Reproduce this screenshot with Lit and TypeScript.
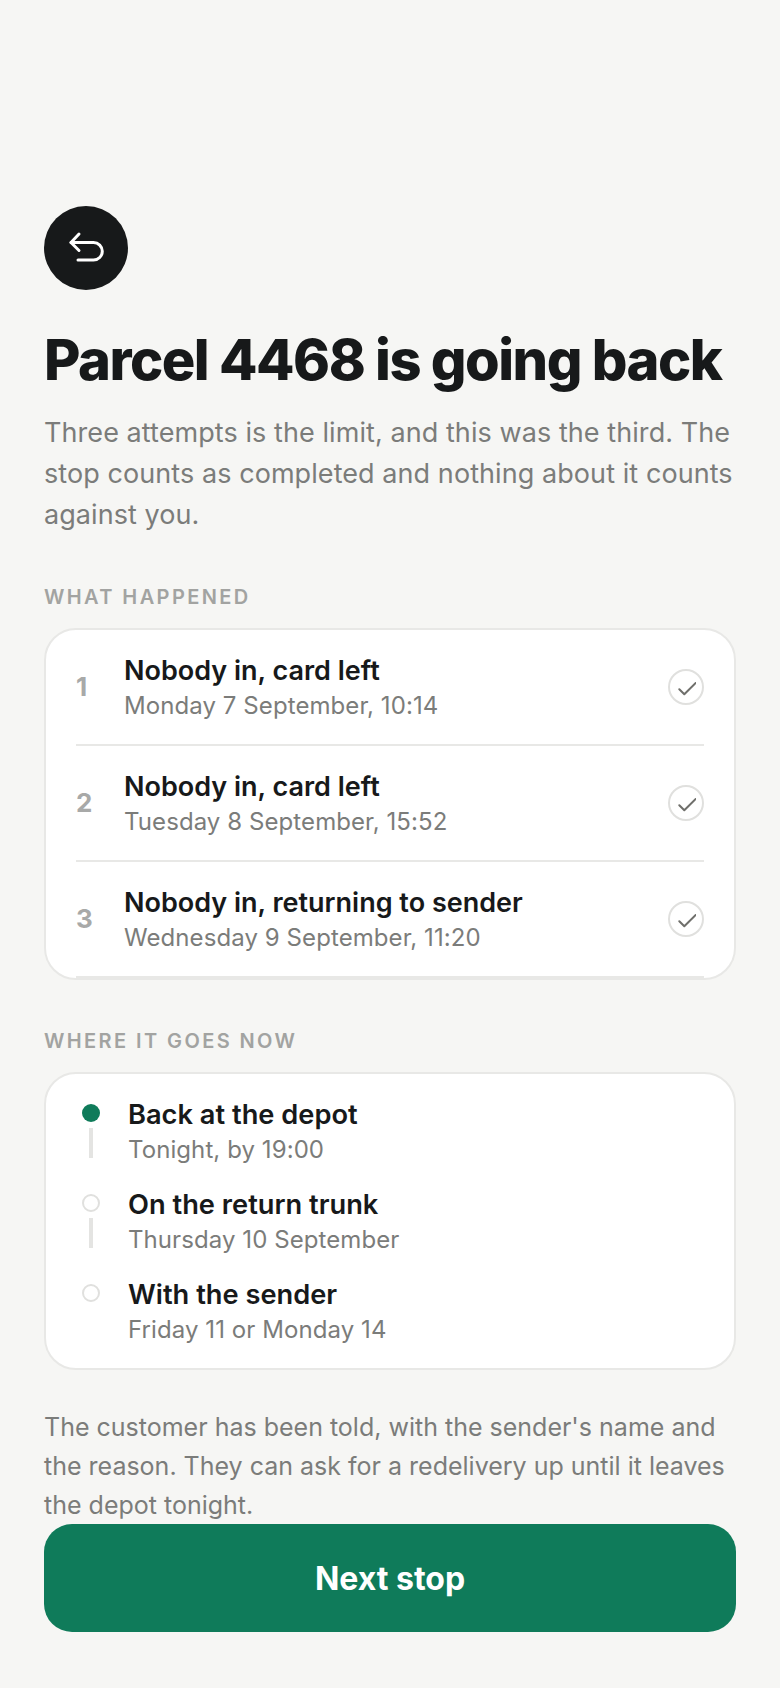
import { LitElement, html, css } from "lit";
import { customElement } from "lit/decorators.js";

const attempts = [
  ["1", "Nobody in, card left", "Monday 7 September, 10:14"],
  ["2", "Nobody in, card left", "Tuesday 8 September, 15:52"],
  ["3", "Nobody in, returning to sender", "Wednesday 9 September, 11:20"],
];
const steps = [
  ["Back at the depot", "Tonight, by 19:00"],
  ["On the return trunk", "Thursday 10 September"],
  ["With the sender", "Friday 11 or Monday 14"],
];

@customElement("app-root")
export class AppRoot extends LitElement {
  static styles = css`
    :host { display: block; height: 1688px; background: #f6f6f4; font-family: Inter, "Liberation Sans", sans-serif; color: #17191a; overflow: hidden; }
    .page { display: flex; flex-direction: column; padding: 206px 44px 0; height: 1688px; box-sizing: border-box; }
    .back { width: 84px; height: 84px; border-radius: 50%; background: #17191a; display: flex; align-items: center; justify-content: center; border: 0; padding: 0; flex: none; }
    h1 { margin: 37px 0 0; font-size: 56px; line-height: 66px; font-weight: 800; letter-spacing: -1.5px; white-space: nowrap; }
    .lead { margin: 19px 0 0; font-size: 27px; line-height: 41px; font-weight: 400; letter-spacing: 0.07px; color: #7b7c7a; }
    .label { margin: 50px 0 0; font-size: 20px; line-height: 24px; font-weight: 600; letter-spacing: 2.4px; color: #a2a3a1; }
    .label.second { margin-top: 49px; }
    .card { margin-top: 19px; background: #fff; border: 2px solid #e8e8e6; border-radius: 32px; box-sizing: border-box; }
    .attempts { padding: 0 30px; }
    .row { display: flex; align-items: center; height: 116px; box-sizing: border-box; border-bottom: 2px solid #e8e8e6; }
    .n { width: 48px; margin-top: -2px; font-size: 26px; font-weight: 700; color: #a8a9a8; flex: none; }
    .txt { flex: 1; }
    .row .txt { padding-top: 2px; }
    .t { font-size: 27px; line-height: 36px; font-weight: 600; }
    .where .t { font-size: 27.25px; }
    .s { font-size: 24px; line-height: 34px; font-weight: 400; letter-spacing: 0.08px; color: #7b7c7a; }
    .check { width: 36px; height: 36px; border-radius: 50%; border: 2px solid #e0e0de; box-sizing: border-box; display: flex; align-items: center; justify-content: center; flex: none; }
    .where { padding: 23px 32px 21px; }
    .step { display: flex; padding-bottom: 20px; }
    .step:last-child { padding-bottom: 0; }
    .rail { width: 18px; margin-left: 4px; margin-right: 28px; display: flex; flex-direction: column; align-items: center; padding-top: 7px; flex: none; height: 63px; }
    .dot { width: 18px; height: 18px; border-radius: 50%; box-sizing: border-box; border: 2px solid #e0e0de; background: #fff; flex: none; }
    .dot.on { background: #0f7b5a; border: 0; }
    .line { width: 4px; height: 30px; margin-top: 6px; background: #e4e4e2; }
    .foot { margin: 38px 0 0; font-size: 25px; line-height: 39px; font-weight: 400; color: #7b7c7a; }
    .next { flex: none; margin-top: -1px; height: 108px; border: 0; border-radius: 28px; background: #0f7b5a; color: #fff; font: 700 32px Inter, "Liberation Sans", sans-serif; }
  `;

  render() {
    return html`<div class="page">
      <button class="back" aria-label="Back">
        <svg width="40" height="40" viewBox="0 0 40 40" fill="none" stroke="#fff" stroke-width="3" stroke-linecap="round" stroke-linejoin="round"><path d="M13 6l-8 8.5 8 8"/><path d="M5 14.5H27.5a8.8 8.8 0 0 1 0 17.6H12"/></svg>
      </button>
      <h1>Parcel 4468 is going back</h1>
      <p class="lead">Three attempts is the limit, and this was the third. The stop counts as completed and nothing about it counts against you.</p>
      <div class="label">WHAT HAPPENED</div>
      <div class="card attempts">
        ${attempts.map(([n, t, s]) => html`<div class="row">
          <div class="n">${n}</div>
          <div class="txt"><div class="t">${t}</div><div class="s">${s}</div></div>
          <div class="check"><svg width="20" height="20" viewBox="0 0 20 20" fill="none" stroke="#6f6f6b" stroke-width="2" stroke-linecap="round" stroke-linejoin="round"><path d="M3.3 12.3l5 5L19.7 6"/></svg></div>
        </div>`)}
      </div>
      <div class="label second">WHERE IT GOES NOW</div>
      <div class="card where">
        ${steps.map(([t, s], i) => html`<div class="step">
          <div class="rail"><div class="dot ${i === 0 ? "on" : ""}"></div>${i < 2 ? html`<div class="line"></div>` : ""}</div>
          <div class="txt"><div class="t">${t}</div><div class="s">${s}</div></div>
        </div>`)}
      </div>
      <p class="foot">The customer has been told, with the sender's name and the reason. They can ask for a redelivery up until it leaves the depot tonight.</p>
      <button class="next">Next stop</button>
    </div>`;
  }
}
